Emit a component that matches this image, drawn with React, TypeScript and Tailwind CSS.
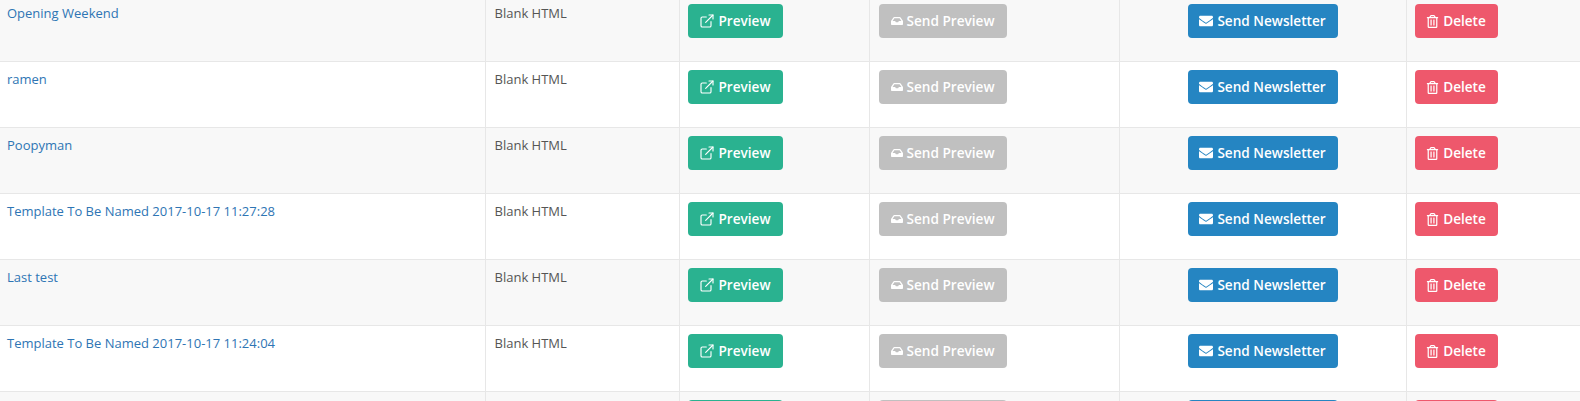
import React from 'react';
import { ExternalLink } from 'lucide-react';
import { FaEnvelope, FaInbox, FaRegTrashAlt } from 'react-icons/fa';

const templates = [
    'Opening Weekend',
    'ramen',
    'Poopyman',
    'Template To Be Named 2017-10-17 11:27:28',
    'Last test',
    'Template To Be Named 2017-10-17 11:24:04',
];

const cell = 'border border-[#e7e7e7] p-[8px] align-top';

const Btn: React.FC<{ className: string; children?: React.ReactNode }> = ({ className, children }) => (
    <a className={`inline-flex h-[34px] items-center justify-center rounded-[4px] text-[13.6px] font-semibold text-white ${className}`}>
        {children}
    </a>
);

export default function App() {
    return (
        <div className="h-[401px] w-[1580px] overflow-hidden bg-white font-['Open_Sans',sans-serif] text-[13px] text-[#555555]">
            <table className="-mt-[5px] w-[1580px] table-fixed border-collapse">
                <colgroup>
                    <col className="w-[485px]" />
                    <col className="w-[194px]" />
                    <col className="w-[190px]" />
                    <col className="w-[250px]" />
                    <col className="w-[287px]" />
                    <col className="w-[174px]" />
                </colgroup>
                <tbody>
                    {templates.map((name, i) => (
                        <tr key={i} className={`h-[66px] ${i % 2 === 0 ? 'bg-[#f8f8f8]' : 'bg-white'}`}>
                            <td className={`${cell} border-l-0 pl-[7px] pt-[7px] leading-[20px]`}>
                                <a className="text-[#2e75b4]">{name}</a>
                            </td>
                            <td className={`${cell} pl-[9px] pt-[7px] leading-[20px]`}>Blank HTML</td>
                            <td className={`${cell} leading-[0]`}>
                                <Btn className="w-[95px] gap-[3px] bg-[#2ab290]">
                                    <ExternalLink size={16} strokeWidth={1.7} />
                                    Preview
                                </Btn>
                            </td>
                            <td className={`${cell} leading-[0]`}>
                                <Btn className="ml-[1px] w-[128px] gap-[4px] bg-[#c0c0c0]">
                                    <FaInbox size={12} />
                                    Send Preview
                                </Btn>
                            </td>
                            <td className={`${cell} text-center leading-[0]`}>
                                <Btn className="w-[150px] gap-[4px] bg-[#2585c2]">
                                    <FaEnvelope size={14} />
                                    Send Newsletter
                                </Btn>
                            </td>
                            <td className={`${cell} leading-[0]`}>
                                <Btn className="w-[83px] gap-[4px] bg-[#ee586c]">
                                    <FaRegTrashAlt size={13} />
                                    Delete
                                </Btn>
                            </td>
                        </tr>
                    ))}
                    {/* next row is cut off by the window, only the button tops show */}
                    <tr className="h-[66px] bg-[#f8f8f8]">
                        <td className={`${cell} border-l-0`} />
                        <td className={cell} />
                        <td className={`${cell} leading-[0]`}>
                            <Btn className="w-[95px] bg-[#2ab290]" />
                        </td>
                        <td className={`${cell} leading-[0]`}>
                            <Btn className="ml-[1px] w-[128px] bg-[#c0c0c0]" />
                        </td>
                        <td className={`${cell} text-center leading-[0]`}>
                            <Btn className="w-[150px] bg-[#2585c2]" />
                        </td>
                        <td className={`${cell} leading-[0]`}>
                            <Btn className="w-[83px] bg-[#ee586c]" />
                        </td>
                    </tr>
                </tbody>
            </table>
        </div>
    );
}
